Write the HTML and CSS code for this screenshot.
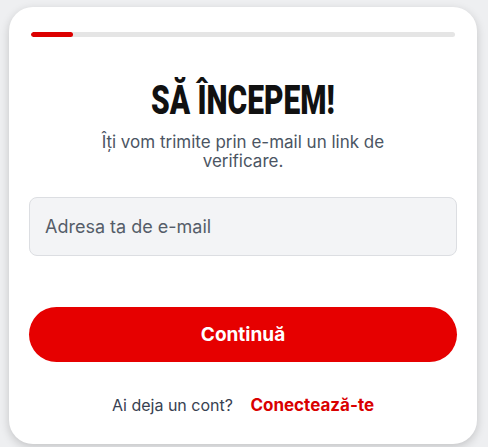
FILE: index.html
```html
<!DOCTYPE html>
<html lang="ro">
<head>
  <meta charset="UTF-8">
  <title>Să începem</title>
  <meta name="viewport" content="width=device-width, initial-scale=1.0">
  <link rel="stylesheet" href="styles.css">
</head>
<body>

  <div class="card">
    <div class="progress">
      <div class="progress-fill" style="width: 10%;"></div>
    </div>

    <h1 class="title"><span>SĂ ÎNCEPEM!</span></h1>
    <p class="subtitle">Îți vom trimite prin e-mail un link de verificare.</p>

    <form class="signup-form">
      <input type="email" class="email-input" placeholder="Adresa ta de e-mail">
      <button type="submit" class="continue-button">Continuă</button>
    </form>

    <p class="login-line">Ai deja un cont? <a href="#">Conectează-te</a></p>
  </div>

</body>
</html>
```

FILE: styles.css
```css
html, body {
  margin: 0;
  height: 100%;
}
body {
  font-family: 'Inter', 'Noto Sans', sans-serif;
  background: #eeeff1;
  color: #374151;
  padding: 7px 11px 0 9px;
  box-sizing: border-box;
}
.card {
  background: #fff;
  border-radius: 24px;
  box-shadow: 0 3px 10px rgba(0, 0, 0, 0.18);
  padding: 25px 20px 0;
  height: 437px;
  box-sizing: border-box;
  text-align: center;
}
.progress {
  height: 5px;
  margin: 0 2px;
  background: #e5e5e5;
  border-radius: 3px;
  overflow: hidden;
}
.progress-fill {
  height: 100%;
  background: #dc0000;
  border-radius: 3px;
}
.title {
  margin: 40px 0 0;
  font-family: 'Roboto', sans-serif;
  font-weight: 900;
  font-size: 41px;
  line-height: 46px;
  color: #111;
}
.title span {
  display: inline-block;
  transform: scaleX(0.73);
}
.subtitle {
  margin: 10px auto 0;
  max-width: 320px;
  font-size: 17px;
  line-height: 19px;
  color: #4b5563;
}
.signup-form {
  display: flex;
  flex-direction: column;
  gap: 51px;
  margin-top: 26px;
}
.email-input {
  height: 59px;
  box-sizing: border-box;
  padding: 0 15px;
  font-family: inherit;
  font-size: 18px;
  background: #f3f4f6;
  border: 1px solid #dcdee2;
  border-radius: 8px;
  color: #111;
}
.email-input::placeholder {
  color: #555d69;
}
.continue-button {
  height: 55px;
  border: none;
  border-radius: 28px;
  background: #e60000;
  color: #fff;
  font-family: inherit;
  font-size: 19px;
  font-weight: 700;
  cursor: pointer;
}
.login-line {
  margin: 33px 0 0;
  font-size: 16px;
  color: #374151;
}
.login-line a {
  margin-left: 13px;
  font-size: 17px;
  color: #d90000;
  font-weight: 700;
  text-decoration: none;
}
```
